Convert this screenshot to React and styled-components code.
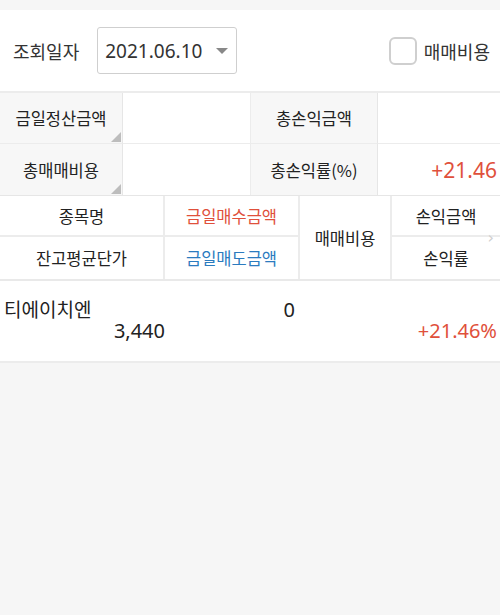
import React from "react";
import styled, { createGlobalStyle } from "styled-components";

const Global = createGlobalStyle`
  html, body { margin: 0; padding: 0; background: #f6f6f6; }
  body { font-family: "Noto Sans", "Noto Sans CJK KR", sans-serif; color: #222; }
  * { box-sizing: border-box; }
`;

const Page = styled.div`
  width: 500px;
  min-height: 615px;
  background: #f6f6f6;
  padding-top: 10px;
`;

const Toolbar = styled.div`
  height: 83px;
  background: #fff;
  display: flex;
  align-items: center;
  padding: 0 10px 0 13px;
  border-bottom: 2px solid #ececec;
`;

const Label = styled.span`
  font-family: "Noto Sans CJK KR", sans-serif;
  font-size: 18px;
  color: #333;
  margin-right: 18px;
`;

const DateBox = styled.div`
  width: 140px;
  height: 47px;
  border: 1px solid #cfcfcf;
  border-radius: 3px;
  display: flex;
  align-items: center;
  justify-content: space-between;
  padding: 0 8px 0 7px;
  font-size: 19px;
  color: #333;
`;

const Caret = styled.span`
  width: 0;
  height: 0;
  border-left: 6px solid transparent;
  border-right: 6px solid transparent;
  border-top: 6px solid #888;
`;

const Spacer = styled.div`
  flex: 1;
`;

const Check = styled.span`
  width: 28px;
  height: 28px;
  border: 2px solid #cfcfcf;
  border-radius: 6px;
  margin-right: 7px;
`;

const CheckText = styled.span`
  font-family: "Noto Sans CJK KR", sans-serif;
  font-size: 18px;
  color: #333;
`;

const Summary = styled.div`
  display: grid;
  grid-template-columns: 123px 127px 128px 122px;
  grid-auto-rows: 51px;
  background: #fff;
  border-bottom: 1px solid #e6e6e6;
`;

const SumLabel = styled.div`
  position: relative;
  background: #f7f7f7;
  display: flex;
  align-items: center;
  justify-content: center;
  font-family: "Noto Sans CJK KR", sans-serif;
  font-size: 16.5px;
  color: #222;
  border-right: 1px solid #e6e6e6;
  border-left: ${(p) => (p.$inner ? "1px solid #ececec" : "0")};
  border-bottom: ${(p) => (p.$last ? "0" : "1px solid #ececec")};
  &::after {
    content: "";
    display: ${(p) => (p.$corner ? "block" : "none")};
    position: absolute;
    right: 1px;
    bottom: 1px;
    width: 0;
    height: 0;
    border-left: 10px solid transparent;
    border-bottom: 10px solid #bdbdbd;
  }
`;

const SumValue = styled.div`
  background: #fff;
  display: flex;
  align-items: center;
  justify-content: flex-end;
  padding-right: 3px;
  font-size: 21px;
  color: ${(p) => p.$color || "#222"};
  border-bottom: ${(p) => (p.$last ? "0" : "1px solid #ececec")};
`;

const Head = styled.div`
  position: relative;
  display: grid;
  grid-template-columns: 165px 135px 92px 108px;
  grid-template-rows: 41px 42px;
  background: #fff;
  border-bottom: 2px solid #e9e9e9;
`;

const HeadCell = styled.div`
  display: flex;
  align-items: center;
  justify-content: center;
  font-family: "Noto Sans CJK KR", sans-serif;
  font-size: 16.5px;
  color: ${(p) => p.$color || "#222"};
  grid-column: ${(p) => p.$col};
  grid-row: ${(p) => p.$row};
  border-right: ${(p) => (p.$col === 4 ? "0" : "2px solid #ececec")};
  border-bottom: ${(p) => (p.$row === 1 ? "2px solid #ececec" : "0")};
`;

const Chevron = styled.span`
  position: absolute;
  right: 6px;
  top: 32px;
  font-size: 16px;
  color: #cfcfcf;
  font-family: "DejaVu Sans", sans-serif;
`;

const DataRow = styled.div`
  display: grid;
  grid-template-columns: 165px 135px 92px 108px;
  grid-template-rows: 40px 40px;
  background: #fff;
  border-bottom: 2px solid #ececec;
`;

const DataCell = styled.div`
  display: flex;
  align-items: ${(p) => (p.$top ? "flex-end" : "flex-start")};
  justify-content: ${(p) => (p.$left ? "flex-start" : "flex-end")};
  padding-left: ${(p) => (p.$left ? "4px" : "0")};
  padding-right: ${(p) => p.$pr || "0px"};
  font-family: ${(p) =>
    p.$kr ? '"Noto Sans CJK KR", sans-serif' : '"Noto Sans", sans-serif'};
  font-size: ${(p) => (p.$kr ? "19px" : "20px")};
  line-height: 26px;
  color: ${(p) => p.$color || "#222"};
  transform: translateY(${(p) => p.$dy || "0px"});
`;

const RED = "#e0503b";
const BLUE = "#2b7bbf";

export default function App() {
  return (
    <>
      <Global />
      <Page>
        <Toolbar>
          <Label>조회일자</Label>
          <DateBox>
            2021.06.10
            <Caret />
          </DateBox>
          <Spacer />
          <Check />
          <CheckText>매매비용</CheckText>
        </Toolbar>
        <Summary>
          <SumLabel $corner>금일정산금액</SumLabel>
          <SumValue />
          <SumLabel $inner>총손익금액</SumLabel>
          <SumValue />
          <SumLabel $corner $last>총매매비용</SumLabel>
          <SumValue $last />
          <SumLabel $inner $last>총손익률(%)</SumLabel>
          <SumValue $last $color={RED}>+21.46</SumValue>
        </Summary>
        <Head>
          <HeadCell $col={1} $row={1}>종목명</HeadCell>
          <HeadCell $col={2} $row={1} $color={RED}>금일매수금액</HeadCell>
          <HeadCell $col={3} $row="1 / span 2">매매비용</HeadCell>
          <HeadCell $col={4} $row={1}>손익금액</HeadCell>
          <HeadCell $col={1} $row={2}>잔고평균단가</HeadCell>
          <HeadCell $col={2} $row={2} $color={BLUE}>금일매도금액</HeadCell>
          <HeadCell $col={4} $row={2}>손익률</HeadCell>
          <Chevron>›</Chevron>
        </Head>
        <DataRow>
          <DataCell $left $kr $top $dy="1px">티에이치엔</DataCell>
          <DataCell $top $pr="5px" $dy="2px">0</DataCell>
          <DataCell $top />
          <DataCell $top />
          <DataCell $dy="-3px">3,440</DataCell>
          <DataCell />
          <DataCell />
          <DataCell $pr="3px" $color={RED} $dy="-3px">+21.46%</DataCell>
        </DataRow>
      </Page>
    </>
  );
}
